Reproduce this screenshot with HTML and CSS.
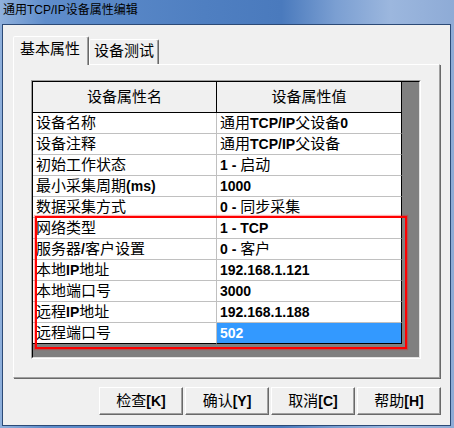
FILE: index.html
```html
<!DOCTYPE html>
<html lang="zh-CN">
<head>
    <meta charset="UTF-8">
    <title>通用TCP/IP设备属性编辑</title>
    <link rel="stylesheet" href="styles.css">
</head>
<body>
    <div class="window">
        <div class="titlebar">通用TCP/IP设备属性编辑</div>
        <div class="client">
            <div class="tabs">
                <div class="tab active">基本属性</div>
                <div class="tab">设备测试</div>
            </div>
            <div class="panel">
                <div class="grid">
                    <div class="grid-inner">
                        <div class="row head">
                            <div class="cell name">设备属性名</div>
                            <div class="cell value">设备属性值</div>
                        </div>
                        <div class="row">
                            <div class="cell name">设备名称</div>
                            <div class="cell value">通用<b>TCP/IP</b>父设备<b>0</b></div>
                        </div>
                        <div class="row">
                            <div class="cell name">设备注释</div>
                            <div class="cell value">通用<b>TCP/IP</b>父设备</div>
                        </div>
                        <div class="row">
                            <div class="cell name">初始工作状态</div>
                            <div class="cell value"><b>1 - </b>启动</div>
                        </div>
                        <div class="row">
                            <div class="cell name">最小采集周期<b>(ms)</b></div>
                            <div class="cell value"><b>1000</b></div>
                        </div>
                        <div class="row">
                            <div class="cell name">数据采集方式</div>
                            <div class="cell value"><b>0 - </b>同步采集</div>
                        </div>
                        <div class="row">
                            <div class="cell name">网络类型</div>
                            <div class="cell value"><b>1 - TCP</b></div>
                        </div>
                        <div class="row">
                            <div class="cell name">服务器<b>/</b>客户设置</div>
                            <div class="cell value"><b>0 - </b>客户</div>
                        </div>
                        <div class="row">
                            <div class="cell name">本地<b>IP</b>地址</div>
                            <div class="cell value"><b>192.168.1.121</b></div>
                        </div>
                        <div class="row">
                            <div class="cell name">本地端口号</div>
                            <div class="cell value"><b>3000</b></div>
                        </div>
                        <div class="row">
                            <div class="cell name">远程<b>IP</b>地址</div>
                            <div class="cell value"><b>192.168.1.188</b></div>
                        </div>
                        <div class="row">
                            <div class="cell name">远程端口号</div>
                            <div class="cell value selected"><b>502</b></div>
                        </div>
                    </div>
                    <!-- 红框标注 -->
                    <div class="mark"></div>
                </div>
            </div>
            <div class="buttons">
                <button>检查<b>[K]</b></button>
                <button>确认<b>[Y]</b></button>
                <button>取消<b>[C]</b></button>
                <button>帮助<b>[H]</b></button>
            </div>
        </div>
    </div>
</body>
</html>
```

FILE: styles.css
```css
/* Reset */
* {
    margin: 0;
    padding: 0;
    box-sizing: border-box;
}

body {
    width: 454px;
    height: 428px;
    overflow: hidden;
    font-family: "Liberation Sans", "Noto Sans CJK SC", sans-serif;
    color: #000000;
    background: linear-gradient(to right, #8fb0dc 0%, #5f8dcb 10%, #4f7fc1 45%, #4a7abd 62%, #7b9fd2 74%, #9cb7de 86%, #8eabd6 100%);
}

/* Janela */
.window {
    height: 428px;
    display: flex;
    flex-direction: column;
}

.titlebar {
    height: 24px;
    padding-left: 3px;
    font-size: 12px;
    line-height: 21px;
    white-space: nowrap;
}

.client {
    flex: 1;
    margin: 0 3px 2px 2px;
    border: 1px solid #2c4a76;
    background-color: #f0f0f0;
    padding: 11px 0 0 10px;
}

/* Abas */
.tabs {
    display: flex;
    align-items: flex-end;
    height: 28px;
}

.tab {
    width: 70px;
    height: 25px;
    border: 1px solid;
    border-bottom: none;
    border-color: #ffffff #696969 transparent #ffffff;
    border-radius: 2px 2px 0 0;
    box-shadow: inset -1px 0 0 #a0a0a0;
    font-size: 15px;
    line-height: 22px;
    text-align: center;
    background-color: #f0f0f0;
}

.tab.active {
    width: 76px;
    height: 29px;
    margin-bottom: -1px;
    line-height: 24px;
    padding-right: 2px;
    position: relative;
    z-index: 1;
}

.panel {
    width: 427px;
    height: 314px;
    border: 1px solid;
    border-color: #ffffff #a0a0a0 #a0a0a0 #ffffff;
    box-shadow: 1px 1px 0 #696969;
    padding: 15px 0 0 17px;
}

/* Grade */
.grid {
    width: 390px;
    height: 279px;
    border: 1px solid;
    border-color: #a0a0a0 #ffffff #ffffff #a0a0a0;
    position: relative;
}

.grid-inner {
    height: 100%;
    border: 1px solid;
    border-color: #000000 #e3e3e3 #e3e3e3 #000000;
    background-color: #808080;
}

.row {
    display: flex;
    height: 21px;
}

.cell {
    height: 100%;
    border-right: 1px solid #c0c0c0;
    border-bottom: 1px solid #c0c0c0;
    background-color: #ffffff;
    padding-left: 3px;
    font-size: 15px;
    line-height: 20px;
    white-space: nowrap;
    overflow: hidden;
}

.name {
    width: 184px;
}

.value {
    width: 185px;
    border-right-color: #000000;
}

.head {
    height: 31px;
}

.head .cell {
    background-color: #f0f0f0;
    border-bottom-color: #000000;
    border-right-color: #000000;
    text-align: center;
    line-height: 30px;
    padding: 0;
}

.row:last-child .cell {
    border-bottom-color: #000000;
}

.cell.selected {
    background-color: #3399ff;
    color: #ffffff;
}

.cell b {
    font-size: 14px;
}

.mark {
    position: absolute;
    left: 3px;
    top: 135px;
    width: 372px;
    height: 133px;
    border: 2px solid #ff0000;
    box-shadow: 0 0 1px 1px rgba(255, 0, 0, 0.3);
}

/* Botoes */
.buttons {
    display: flex;
    justify-content: flex-end;
    gap: 2px;
    margin-top: 9px;
    padding-right: 9px;
}

button {
    width: 84px;
    height: 28px;
    border: 1px solid;
    border-color: #ffffff #696969 #696969 #ffffff;
    box-shadow: inset -1px -1px 0 #a0a0a0;
    background-color: #f0f0f0;
    font-family: inherit;
    font-size: 15px;
    color: #000000;
    line-height: 24px;
}

button b {
    font-size: 14px;
}
```
